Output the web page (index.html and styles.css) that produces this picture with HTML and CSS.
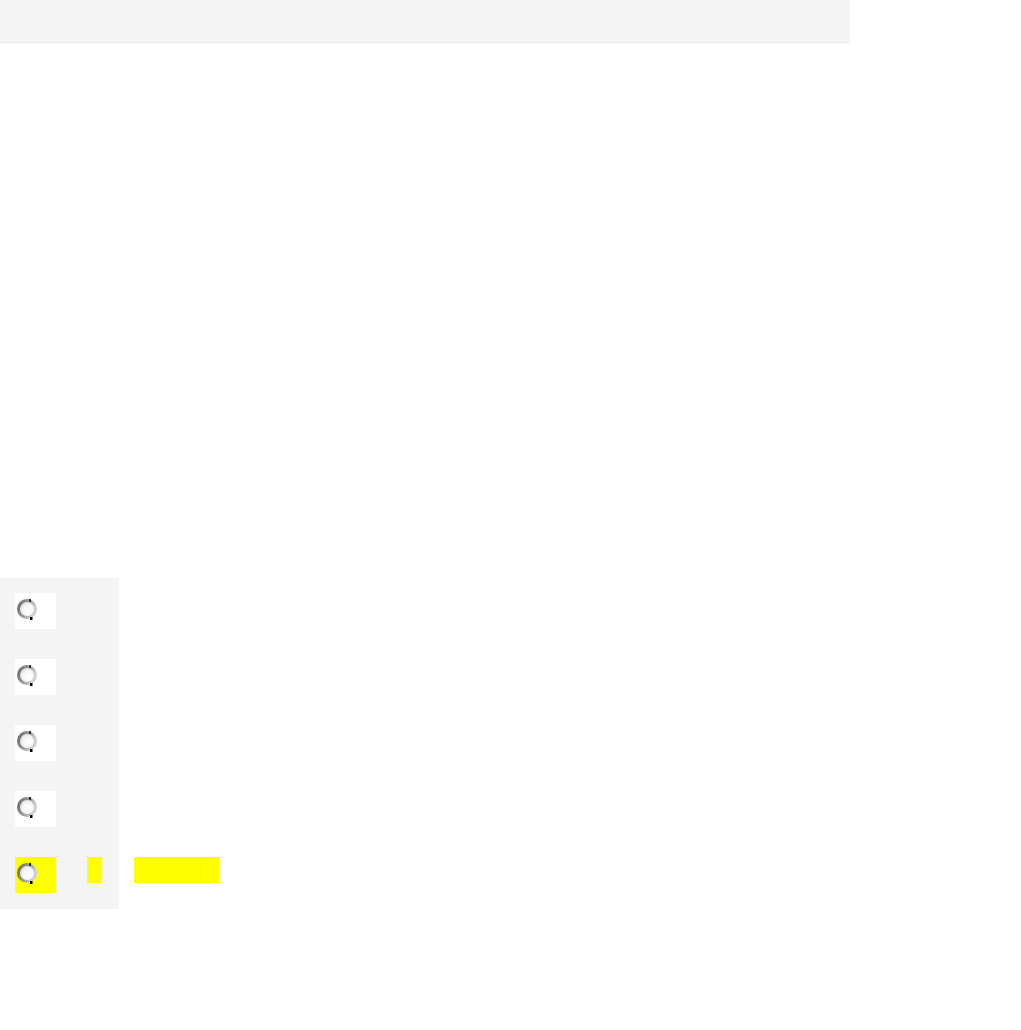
FILE: index.html
```html
<!DOCTYPE html>
<html>
<head>
<meta charset="utf-8">
<link rel="stylesheet" href="styles.css">
</head>
<body>
<div class="page">
  <header class="topbar"></header>
  <svg class="defs" width="0" height="0"><defs><radialGradient id="g1" cx="0.6" cy="0.6" r="0.6"><stop offset="0" stop-color="#ffffff"/><stop offset="0.6" stop-color="#f4f4f4"/><stop offset="1" stop-color="#d6d6d6"/></radialGradient><linearGradient id="ring" x1="0" y1="0" x2="1" y2="0.4"><stop offset="0" stop-color="#666"/><stop offset="0.55" stop-color="#9c9c9c"/><stop offset="1" stop-color="#cfcfcf"/></linearGradient></defs></svg>
  <aside class="sidebar">
    <div class="row"><div class="box"><svg class="radio" width="26" height="32" viewBox="0 0 26 32"><circle cx="12" cy="16" r="8.5" fill="url(#g1)" stroke="url(#ring)" stroke-width="3"/><rect x="14" y="6" width="2" height="3" fill="#333"/><rect x="15" y="24" width="2.5" height="3" fill="#000"/></svg></div></div>
    <div class="row"><div class="box"><svg class="radio" width="26" height="32" viewBox="0 0 26 32"><circle cx="12" cy="16" r="8.5" fill="url(#g1)" stroke="url(#ring)" stroke-width="3"/><rect x="14" y="6" width="2" height="3" fill="#333"/><rect x="15" y="24" width="2.5" height="3" fill="#000"/></svg></div></div>
    <div class="row"><div class="box"><svg class="radio" width="26" height="32" viewBox="0 0 26 32"><circle cx="12" cy="16" r="8.5" fill="url(#g1)" stroke="url(#ring)" stroke-width="3"/><rect x="14" y="6" width="2" height="3" fill="#333"/><rect x="15" y="24" width="2.5" height="3" fill="#000"/></svg></div></div>
    <div class="row"><div class="box"><svg class="radio" width="26" height="32" viewBox="0 0 26 32"><circle cx="12" cy="16" r="8.5" fill="url(#g1)" stroke="url(#ring)" stroke-width="3"/><rect x="14" y="6" width="2" height="3" fill="#333"/><rect x="15" y="24" width="2.5" height="3" fill="#000"/></svg></div></div>
    <div class="row"><div class="box hl"><svg class="radio" width="26" height="32" viewBox="0 0 26 32"><circle cx="12" cy="16" r="8.5" fill="url(#g1)" stroke="url(#ring)" stroke-width="3"/><rect x="14" y="6" width="2" height="3" fill="#333"/><rect x="15" y="24" width="2.5" height="3" fill="#000"/></svg></div><span class="mark small"></span><span class="mark wide"></span></div>
  </aside>
</div>
</body>
</html>
```

FILE: styles.css
```css
html, body {
  margin: 0;
  padding: 0;
  background: #ffffff;
  font-family: "Liberation Sans", Arial, sans-serif;
}
.page {
  display: flex;
  flex-direction: column;
  align-items: flex-start;
}
.defs {
  position: absolute;
}
.topbar {
  width: 850px;
  height: 42px;
  background: #f5f5f5;
  border-bottom: 1px solid #e8e8e8;
}
.sidebar {
  margin-top: 535px;
  width: 104px;
  padding: 15px 0 16px 15px;
  background: #f4f4f4;
  display: flex;
  flex-direction: column;
  gap: 30px;
}
.row {
  display: flex;
  align-items: flex-start;
  height: 36px;
  white-space: nowrap;
}
.box {
  width: 41px;
  height: 36px;
  background: #ffffff;
  flex: none;
  display: flex;
  align-items: flex-start;
}
.box.hl {
  background: #ffff00;
}
.radio {
  display: block;
}
.mark {
  display: block;
  height: 26px;
  background: #ffff00;
  flex: none;
}
.mark.small {
  width: 15px;
  margin-left: 31px;
}
.mark.wide {
  width: 85px;
  margin-left: 32px;
}
```
